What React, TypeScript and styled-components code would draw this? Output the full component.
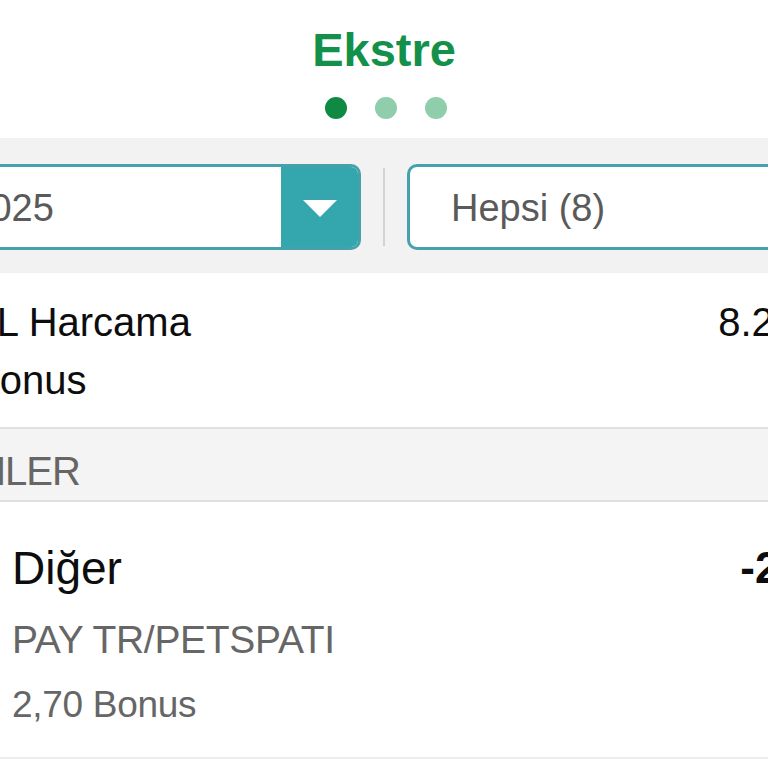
import React from 'react'
import styled, { createGlobalStyle } from 'styled-components'

const GlobalStyle = createGlobalStyle`
  html, body {
    margin: 0;
    padding: 0;
    background: #ffffff;
    overflow: hidden;
  }
  body {
    font-family: 'Liberation Sans', Arial, Helvetica, sans-serif;
    -webkit-font-smoothing: antialiased;
  }
`

// the reference is a zoomed crop of a phone screen, so the page is wider than the window
const Viewport = styled.div`
  width: 768px;
  height: 768px;
  overflow: hidden;
  background: #ffffff;
`

const Page = styled.div`
  width: 1138px;
  margin-left: -185px;
`

const Header = styled.header`
  display: flex;
  flex-direction: column;
  align-items: center;
  padding: 22px 0 19px;
`

const Title = styled.h1`
  margin: 0;
  font-size: 47px;
  line-height: 56px;
  font-weight: 700;
  color: #13914b;
`

const Dots = styled.div`
  display: flex;
  gap: 28px;
  margin-top: 19px;
  padding-left: 4px;
`

const Dot = styled.span<{ active?: boolean }>`
  width: 22px;
  height: 22px;
  border-radius: 50%;
  background: ${({ active }) => (active ? '#0f8a45' : '#8fcdab')};
`

const FilterBand = styled.div`
  display: grid;
  grid-template-columns: 1fr 2px 1fr;
  column-gap: 22px;
  align-items: center;
  padding: 26px 24px 23px;
  background: #f2f2f2;
`

const SelectBox = styled.div`
  display: flex;
  align-items: stretch;
  height: 86px;
  box-sizing: border-box;
  border: 3px solid #45a2ad;
  border-radius: 10px;
  background: #ffffff;
  overflow: hidden;
`

const SelectValue = styled.div<{ inset: number }>`
  flex: 1;
  display: flex;
  align-items: center;
  padding-left: ${({ inset }) => inset}px;
  padding-top: 2px;
  font-size: 38px;
  color: #5a5a5a;
  white-space: nowrap;
`

const SelectButton = styled.div`
  width: 77px;
  display: flex;
  align-items: center;
  justify-content: center;
  background: #33a7ad;
`

const Caret = styled.span`
  width: 0;
  height: 0;
  border-left: 17px solid transparent;
  border-right: 17px solid transparent;
  border-top: 17px solid #ffffff;
  margin-top: 2px;
`

const Divider = styled.div`
  width: 2px;
  height: 78px;
  background: #d3d3d3;
`

const Summary = styled.section`
  display: flex;
  flex-direction: column;
  gap: 14px;
  padding: 27px 22px 25px 18px;
`

const SummaryRow = styled.div`
  display: flex;
  justify-content: space-between;
  font-size: 40px;
  line-height: 44px;
  color: #0d0d0d;
  white-space: nowrap;
`

const SectionHeader = styled.div`
  padding: 19px 24px 6px 75px;
  background: #f4f4f4;
  border-top: 2px solid #e0e0e0;
  border-bottom: 2px solid #e0e0e0;
  font-size: 40px;
  line-height: 46px;
  letter-spacing: -1px;
  color: #666666;
  white-space: nowrap;
`

const TxRow = styled.div`
  display: flex;
  align-items: flex-start;
  gap: 33px;
  padding: 40px 22px 30px 24px;
  border-bottom: 2px solid #ececec;
`

const TxDate = styled.div`
  width: 140px;
  font-size: 30px;
  line-height: 52px;
  color: #666666;
`

const TxBody = styled.div`
  flex: 1;
  display: flex;
  flex-direction: column;
`

const TxCategory = styled.div`
  font-size: 46px;
  line-height: 52px;
  color: #0d0d0d;
`

const TxDetail = styled.div<{ size: number; gapTop: number }>`
  margin-top: ${({ gapTop }) => gapTop}px;
  font-size: ${({ size }) => size}px;
  line-height: ${({ size }) => size + 7}px;
  letter-spacing: -0.3px;
  color: #666666;
  white-space: nowrap;
`

const TxAmount = styled.div`
  font-size: 44px;
  line-height: 52px;
  font-weight: 700;
  color: #0d0d0d;
  white-space: nowrap;
`

export default function App() {
  return (
    <>
      <GlobalStyle />
      <Viewport>
        <Page>
          <Header>
            <Title>Ekstre</Title>
            <Dots>
              <Dot active />
              <Dot />
              <Dot />
            </Dots>
          </Header>

          <FilterBand>
            <SelectBox>
              <SelectValue inset={28}>Ocak 2025</SelectValue>
              <SelectButton>
                <Caret />
              </SelectButton>
            </SelectBox>
            <Divider />
            <SelectBox>
              <SelectValue inset={41}>Hepsi (8)</SelectValue>
            </SelectBox>
          </FilterBand>

          <Summary>
            <SummaryRow>
              <span>Toplam TL Harcama</span>
              <span>8.234,56 TL</span>
            </SummaryRow>
            <SummaryRow>
              <span>Toplam Bonus</span>
              <span>82,34</span>
            </SummaryRow>
          </Summary>

          <SectionHeader>İŞLEMLER</SectionHeader>

          <TxRow>
            <TxDate>14 Oca</TxDate>
            <TxBody>
              <TxCategory>Diğer</TxCategory>
              <TxDetail size={39} gapTop={23}>
                PAY TR/PETSPATI
              </TxDetail>
              <TxDetail size={37} gapTop={20}>
                2,70 Bonus
              </TxDetail>
            </TxBody>
            <TxAmount>-27,00 TL</TxAmount>
          </TxRow>
        </Page>
      </Viewport>
    </>
  )
}
